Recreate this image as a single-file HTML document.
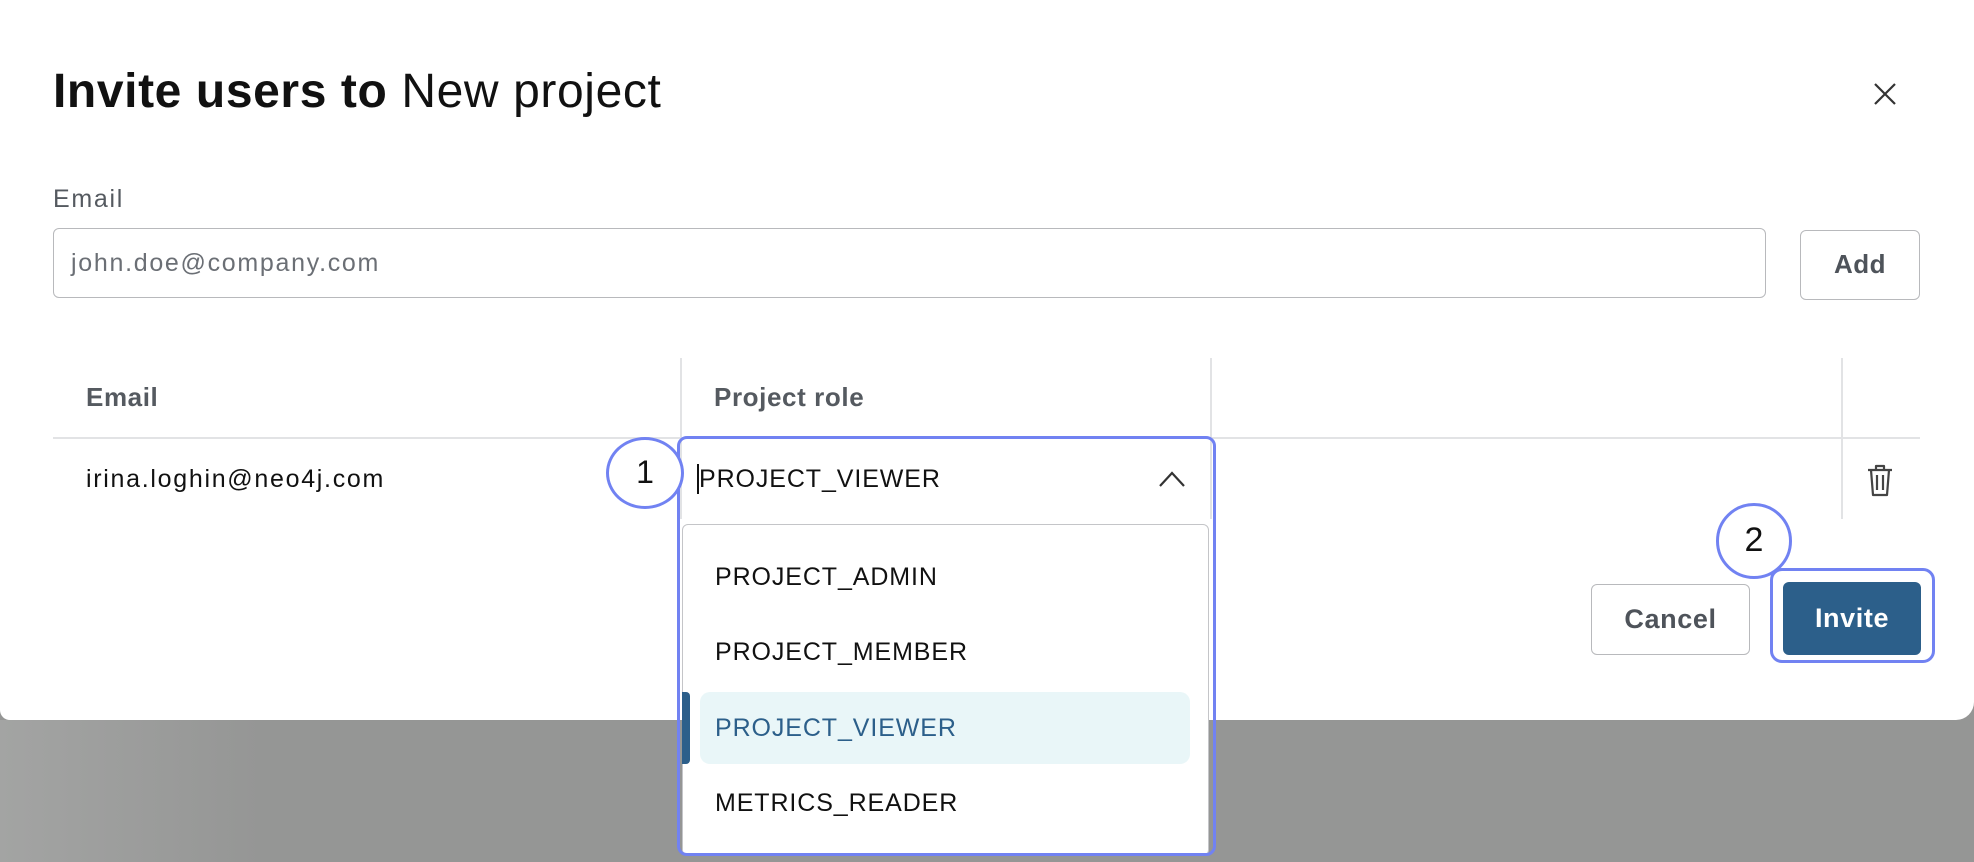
<!DOCTYPE html>
<html><head><meta charset="utf-8"><style>
*{box-sizing:border-box;margin:0;padding:0}
body{width:1974px;height:862px;overflow:hidden;background:#959695;font-family:"Liberation Sans",sans-serif;position:relative}
.a{position:absolute}
.modal{left:0;top:0;width:1974px;height:720px;background:#fff;border-radius:0 0 18px 10px}
.t{white-space:nowrap}
.b{font-size:25px;letter-spacing:1.7px}
.u{font-size:25px;letter-spacing:0.9px}
</style></head><body>
<div class="a" style="left:0;top:720px;width:260px;height:142px;background:linear-gradient(90deg,#a3a4a3,#959695)"></div>
<div class="a modal"></div>
<div class="a t" style="left:53px;top:64px;font-size:48px;letter-spacing:0.6px;color:#111"><b>Invite users to</b> New project</div>
<svg class="a" style="left:1873px;top:82px" width="24" height="24" viewBox="0 0 24 24"><path d="M2 2L22 22M22 2L2 22" stroke="#333" stroke-width="2.2"/></svg>
<div class="a t b" style="left:53px;top:185px;color:#555a60">Email</div>
<div class="a" style="left:53px;top:228px;width:1713px;height:70px;border:1.5px solid #b8b9bc;border-radius:6px"></div>
<div class="a t b" style="left:71px;top:249px;color:#6b6f75">john.doe@company.com</div>
<div class="a" style="left:1800px;top:230px;width:120px;height:70px;border:1.5px solid #b8b9bc;border-radius:6px;font-size:26px;letter-spacing:0.5px;font-weight:bold;color:#4e535a;text-align:center;line-height:67px">Add</div>
<div class="a" style="left:680px;top:358px;width:1.5px;height:161px;background:#e2e3e5"></div>
<div class="a" style="left:1210px;top:358px;width:1.5px;height:161px;background:#e2e3e5"></div>
<div class="a" style="left:1841px;top:358px;width:1.5px;height:161px;background:#e2e3e5"></div>
<div class="a" style="left:53px;top:437px;width:1867px;height:2px;background:#e2e3e5"></div>
<div class="a t" style="left:86px;top:382px;font-size:26px;letter-spacing:0.6px;font-weight:bold;color:#555a60">Email</div>
<div class="a t" style="left:714px;top:382px;font-size:26px;letter-spacing:0.6px;font-weight:bold;color:#555a60">Project role</div>
<div class="a t b" style="left:86px;top:465px;color:#111">irina.loghin@neo4j.com</div>
<div class="a" style="left:682px;top:524px;width:527px;height:332px;background:#fff;border:1.5px solid #c4c5c8;border-radius:6px"></div>
<div class="a" style="left:677px;top:436px;width:539px;height:420px;border:3.5px solid #7182f2;border-radius:10px"></div>
<div class="a" style="left:697px;top:464px;width:1.5px;height:30px;background:#111"></div>
<div class="a t u" style="left:699px;top:465px;color:#111">PROJECT_VIEWER</div>
<svg class="a" style="left:1158px;top:470px" width="28" height="18" viewBox="0 0 28 18"><path d="M2 16L14 3L26 16" fill="none" stroke="#333" stroke-width="2.2"/></svg>
<div class="a" style="left:606px;top:437px;width:78px;height:72px;border:3.5px solid #7182f2;border-radius:50%;background:#fff;font-size:32px;text-align:center;line-height:64px;color:#111">1</div>
<div class="a t u" style="left:715px;top:563px;color:#111">PROJECT_ADMIN</div>
<div class="a t u" style="left:715px;top:638px;color:#111">PROJECT_MEMBER</div>
<div class="a" style="left:700px;top:692px;width:490px;height:72px;background:#e9f6f8;border-radius:10px"></div>
<div class="a" style="left:682px;top:692px;width:8px;height:72px;background:#2c5f8a;border-radius:0 4px 4px 0"></div>
<div class="a t u" style="left:715px;top:714px;color:#2c5f8a">PROJECT_VIEWER</div>
<div class="a t u" style="left:715px;top:789px;color:#111">METRICS_READER</div>
<svg class="a" style="left:1864px;top:462px" width="32" height="36" viewBox="0 0 32 36"><path d="M4 8H28M12 8V4H20V8M7 8L9 33H23L25 8M13 13V28M19 13V28" fill="none" stroke="#444" stroke-width="2.2" stroke-linejoin="round"/></svg>
<div class="a" style="left:1716px;top:503px;width:76px;height:76px;border:3.5px solid #7182f2;border-radius:50%;background:#fff;font-size:34px;text-align:center;line-height:68px;color:#111">2</div>
<div class="a" style="left:1591px;top:584px;width:159px;height:71px;border:1.5px solid #b8b9bc;border-radius:6px;font-size:27px;letter-spacing:0.6px;font-weight:bold;color:#4e535a;text-align:center;line-height:68px">Cancel</div>
<div class="a" style="left:1770px;top:568px;width:165px;height:95px;border:3.5px solid #7182f2;border-radius:12px"></div>
<div class="a" style="left:1783px;top:582px;width:138px;height:73px;background:#2c5f8a;border-radius:6px;font-size:27px;letter-spacing:0.6px;font-weight:bold;color:#fff;text-align:center;line-height:73px">Invite</div>
</body></html>
